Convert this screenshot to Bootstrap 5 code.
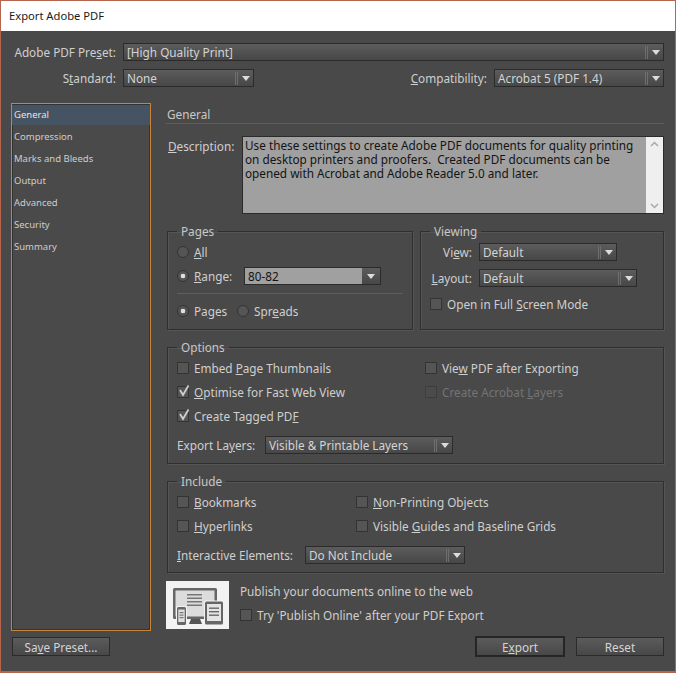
<!DOCTYPE html>
<html lang="en">

<head>
    <meta charset="UTF-8">
    <meta name="viewport" content="width=device-width, initial-scale=1.0">
    <title>Export Adobe PDF</title>
    <link href="https://cdn.jsdelivr.net/npm/bootstrap@5.3.0/dist/css/bootstrap.min.css" rel="stylesheet">
    <style>
        body {
            background: #494949;
            font-family: "Noto Sans", "Liberation Sans", sans-serif;
            font-size: 11.75px;
            line-height: 16px;
            color: #cfcfcf;
        }

        .dlg {
            width: 676px;
            height: 673px;
            border: solid #b5654d;
            border-width: 1px 1px 2px 1px;
            background: #494949;
            overflow: hidden;
        }

        .dlg-title {
            height: 30px;
            background: #fff;
            color: #1a1a1a;
            padding: 7px 8px;
            font-size: 11.2px;
        }

        .top-rows {
            padding: 12px 11px 0 12px;
        }

        .lbl-preset {
            width: 103px;
            margin-right: 7px;
            text-align: right;
            white-space: nowrap;
        }

        .lbl-compat {
            margin-right: 7px;
        }

        .pick {
            height: 18px;
            border: 1px solid #2b2b2b;
            background: linear-gradient(#5c5c5c, #474747);
            color: #d4d4d4;
            padding-left: 3px;
            align-items: center;
            white-space: nowrap;
        }

        .pick .val {
            flex: 1;
        }

        .pick .arr {
            width: 18px;
            height: 13px;
            border-left: 3px double #6e6e6e;
            display: flex;
            align-items: center;
            justify-content: center;
        }

        .pick .arr i {
            width: 0;
            height: 0;
            border: solid transparent;
            border-width: 5px 4px 0;
            border-top-color: #dcdcdc;
        }

        .pick-edit {
            padding-left: 0;
        }

        .pick-edit .val {
            background: #a0a0a0;
            color: #141414;
            height: 16px;
            padding-left: 3px;
        }

        .side {
            width: 140px;
            height: 528px;
            margin-left: 10px;
            border: 1px solid #c5853f;
            box-shadow: inset 0 0 0 1px #333;
            padding: 1px 0;
            font-size: 9.5px;
            background: #4a4a4a;
        }

        .side .list-group-item {
            background: transparent;
            border: 0;
            color: #cdcdcd;
            padding: 0 2px;
            height: 22px;
            line-height: 20px;
        }

        .side .list-group-item.active {
            background: #465362;
            color: #e4e4e4;
            height: 20px;
            margin-bottom: 2px;
        }

        .main-col {
            width: 498px;
            margin-left: 15px;
        }

        .head-txt {
            height: 21px;
            padding: 3px 1px 0;
            border-bottom: 1px solid #5e5e5e;
            color: #c8c8c8;
        }

        .desc-lbl {
            width: 76px;
            padding: 2px 0 0 2px;
        }

        .desc-box {
            width: 422px;
            height: 78px;
            border: 1px solid #2b2b2b;
            background: #a0a0a0;
            color: #141414;
        }

        .desc-txt {
            padding: 1px 2px;
            line-height: 14px;
            white-space: nowrap;
        }

        .desc-bar {
            width: 17px;
            background: #efefef;
            color: #a9a9a9;
        }

        fieldset.grp {
            border: 1px solid #2f2f2f;
            box-shadow: 1px 1px 0 #555, inset 1px 1px 0 #555;
            padding: 0 9px;
            margin-left: 1px;
        }

        fieldset.grp legend {
            float: none;
            width: auto;
            font-size: 11.75px;
            line-height: 16px;
            margin: 0;
            padding: 0 4px;
            color: #c8c8c8;
        }

        .grp-pages {
            width: 246px;
            height: 107px;
        }

        fieldset.grp-view {
            width: 244px;
            height: 107px;
            margin-left: 7px;
        }

        fieldset.grp-opts {
            height: 125px;
            margin-top: 9px;
        }

        fieldset.grp-incl {
            height: 100px;
            margin-top: 9px;
        }

        .ln {
            height: 24px;
            align-items: center;
            white-space: nowrap;
        }

        .form-check-input {
            width: 12px;
            height: 12px;
            margin: 0 5px 0 0;
            flex: none;
            background-color: #555;
            border: 1px solid #333;
        }

        .form-check-input:checked {
            background-color: #555;
            border-color: #333;
        }

        .form-check-input[type=checkbox] {
            border-radius: 0;
        }

        .form-check-input:checked[type=checkbox] {
            background-image: none;
        }

        .form-check-input:checked[type=radio] {
            background-image: radial-gradient(circle, #e0e0e0 2px, transparent 2.6px);
        }

        .form-check-input:disabled {
            opacity: 1;
            background-color: #4b4b4b;
            border-color: #3d3d3d;
        }

        .tick {
            width: 12px;
            height: 12px;
            margin: 0 5px 0 -17px;
            flex: none;
            overflow: visible;
        }

        .off {
            color: #747474;
        }

        .sep {
            border-top: 1px solid #5e5e5e;
            margin: 5px 0;
        }

        .col-a {
            width: 248px;
            margin-top: 1px;
        }

        .col-b {
            width: 179px;
        }

        .col-r {
            margin-top: 1px;
        }

        .pub-art {
            width: 63px;
            height: 48px;
            flex: none;
            background: #f2f2f2;
            display: block;
        }

        .pub-row {
            margin-top: 8px;
        }

        .pub-txt {
            padding-left: 11px;
            margin-top: -2px;
        }

        .act {
            background: linear-gradient(#5b5b5b, #484848);
            border: 1px solid #2b2b2b;
            border-radius: 0;
            color: #d4d4d4;
            font-size: 11.75px;
            line-height: 16px;
            padding: 0;
            height: 19px;
        }

        .act-main {
            border: 2px solid #252525;
            height: 21px;
        }
    </style>
</head>

<body>
    <div class="dlg d-flex flex-column">
        <div class="dlg-title">Export Adobe PDF</div>

        <div class="top-rows">
            <div class="d-flex align-items-center" style="height:18px">
                <div class="lbl-preset">Adobe PDF Pre<u>s</u>et:</div>
                <div class="pick d-flex flex-grow-1"><span class="val">[High Quality Print]</span><span class="arr"><i></i></span></div>
            </div>
            <div class="d-flex align-items-center mt-2" style="height:18px">
                <div class="lbl-preset">S<u>t</u>andard:</div>
                <div class="pick d-flex" style="width:131px"><span class="val">None</span><span class="arr"><i></i></span></div>
                <div class="ms-auto lbl-compat"><u>C</u>ompatibility:</div>
                <div class="pick d-flex" style="width:170px"><span class="val">Acrobat 5 (PDF 1.4)</span><span class="arr"><i></i></span></div>
            </div>
        </div>

        <div class="d-flex" style="margin-top:16px">
            <div class="side">
                <div class="list-group list-group-flush">
                    <div class="list-group-item active">General</div>
                    <div class="list-group-item">Compression</div>
                    <div class="list-group-item">Marks and Bleeds</div>
                    <div class="list-group-item">Output</div>
                    <div class="list-group-item">Advanced</div>
                    <div class="list-group-item">Security</div>
                    <div class="list-group-item">Summary</div>
                </div>
            </div>

            <div class="main-col">
                <div class="head-txt">General</div>

                <div class="d-flex" style="margin-top:12px">
                    <div class="desc-lbl"><u>D</u>escription:</div>
                    <div class="desc-box d-flex">
                        <div class="desc-txt flex-grow-1">Use these settings to create Adobe PDF documents for quality printing<br>on desktop printers and proofers.&nbsp; Created PDF documents can be<br>opened with Acrobat and Adobe Reader 5.0 and later.</div>
                        <div class="desc-bar d-flex flex-column justify-content-between align-items-center py-1">
                            <svg width="9" height="6" viewBox="0 0 9 6"><path d="M1 5 4.500 1.500 8 5" fill="none" stroke="currentColor" stroke-width="1.500"/></svg>
                            <svg width="9" height="6" viewBox="0 0 9 6"><path d="M1 1 4.500 4.500 8 1" fill="none" stroke="currentColor" stroke-width="1.500"/></svg>
                        </div>
                    </div>
                </div>

                <div class="d-flex" style="margin-top:9px">
                    <fieldset class="grp grp-pages">
                        <legend>Pages</legend>
                        <div class="ln d-flex" style="margin-top:1px"><input class="form-check-input" type="radio" name="rng"><span><u>A</u>ll</span></div>
                        <div class="ln d-flex"><input class="form-check-input" type="radio" name="rng" checked><span style="width:50px"><u>R</u>ange:</span>
                            <div class="pick pick-edit d-flex" style="width:137px"><span class="val">80-82</span><span class="arr border-0"><i></i></span></div>
                        </div>
                        <div class="sep"></div>
                        <div class="ln d-flex"><input class="form-check-input" type="radio" name="lay" checked><span style="width:43px">Pa<u>g</u>es</span><input class="form-check-input" type="radio" name="lay"><span>Spr<u>e</u>ads</span></div>
                    </fieldset>

                    <fieldset class="grp grp-view">
                        <legend>Viewing</legend>
                        <div class="d-flex align-items-center" style="height:18px;margin-top:4px"><span style="width:49px;text-align:right;padding-right:7px">Vi<u>e</u>w:</span>
                            <div class="pick d-flex" style="width:138px"><span class="val">Default</span><span class="arr"><i></i></span></div>
                        </div>
                        <div class="d-flex align-items-center" style="height:18px;margin-top:8px"><span style="width:49px;text-align:right;padding-right:7px"><u>L</u>ayout:</span>
                            <div class="pick d-flex" style="width:158px"><span class="val">Default</span><span class="arr"><i></i></span></div>
                        </div>
                        <div class="ln d-flex" style="margin-top:5px"><input class="form-check-input" type="checkbox"><span>Open in Full <u>S</u>creen Mode</span></div>
                    </fieldset>
                </div>

                <fieldset class="grp grp-opts">
                    <legend>Options</legend>
                    <div class="d-flex">
                        <div class="col-a">
                            <div class="ln d-flex"><input class="form-check-input" type="checkbox"><span>Embed <u>P</u>age Thumbnails</span></div>
                            <div class="ln d-flex"><input class="form-check-input" type="checkbox" checked><svg class="tick" viewBox="0 0 12 12"><path d="M3 4 6 9 11.500 -0.500" fill="none" stroke="#cfcfcf" stroke-width="1.800"/></svg><span><u>O</u>ptimise for Fast Web View</span></div>
                            <div class="ln d-flex"><input class="form-check-input" type="checkbox" checked><svg class="tick" viewBox="0 0 12 12"><path d="M3 4 6 9 11.500 -0.500" fill="none" stroke="#cfcfcf" stroke-width="1.800"/></svg><span>Create Tagged PD<u>F</u></span></div>
                        </div>
                        <div class="col-r">
                            <div class="ln d-flex"><input class="form-check-input" type="checkbox"><span>Vie<u>w</u> PDF after Exporting</span></div>
                            <div class="ln d-flex"><input class="form-check-input" type="checkbox" disabled><span class="off">Create Acrobat <u>L</u>ayers</span></div>
                        </div>
                    </div>
                    <div class="d-flex align-items-center" style="height:18px;margin-top:8px"><span style="width:88px">Export La<u>y</u>ers:</span>
                        <div class="pick d-flex" style="width:188px"><span class="val">Visible &amp; Printable Layers</span><span class="arr"><i></i></span></div>
                    </div>
                </fieldset>

                <fieldset class="grp grp-incl">
                    <legend>Include</legend>
                    <div class="d-flex">
                        <div class="col-b col-r">
                            <div class="ln d-flex"><input class="form-check-input" type="checkbox"><span><u>B</u>ookmarks</span></div>
                            <div class="ln d-flex"><input class="form-check-input" type="checkbox"><span><u>H</u>yperlinks</span></div>
                        </div>
                        <div class="col-r">
                            <div class="ln d-flex"><input class="form-check-input" type="checkbox"><span><u>N</u>on-Printing Objects</span></div>
                            <div class="ln d-flex"><input class="form-check-input" type="checkbox"><span>Visible <u>G</u>uides and Baseline Grids</span></div>
                        </div>
                    </div>
                    <div class="d-flex align-items-center" style="height:18px;margin-top:8px"><span style="width:128px"><u>I</u>nteractive Elements:</span>
                        <div class="pick d-flex" style="width:160px"><span class="val">Do Not Include</span><span class="arr"><i></i></span></div>
                    </div>
                </fieldset>

                <div class="d-flex pub-row">
                    <svg class="pub-art" viewBox="0 0 63 48">
                        <rect x="7" y="7" width="44" height="31" rx="1.500" fill="#666"/>
                        <rect x="9.500" y="9.500" width="39" height="26" fill="#dcdcdc"/>
                        <g fill="#777">
                            <rect x="21" y="13" width="15" height="1.500"/>
                            <rect x="21" y="16.500" width="15" height="1.500"/>
                            <rect x="21" y="20" width="15" height="1.500"/>
                            <rect x="21" y="23.500" width="15" height="1.500"/>
                        </g>
                        <path d="M23 43 25 38H34L36 43Z" fill="#555"/>
                        <rect x="38" y="19.500" width="20" height="25" rx="1.500" fill="#f2f2f2"/>
                        <rect x="39" y="20.500" width="18" height="23" rx="1.500" fill="#666"/>
                        <rect x="41" y="23" width="14" height="17" fill="#e4e4e4"/>
                        <g fill="#666">
                            <rect x="43" y="26.500" width="10" height="1.400"/>
                            <rect x="43" y="30" width="10" height="1.400"/>
                            <rect x="43" y="33.500" width="10" height="1.400"/>
                        </g>
                        <rect x="10" y="25" width="11" height="20" rx="1.500" fill="#f2f2f2"/>
                        <rect x="11" y="26" width="9" height="18" rx="1.500" fill="#666"/>
                        <rect x="12.300" y="28.500" width="6.400" height="12.500" fill="#dedede"/>
                        <g fill="#777">
                            <rect x="13.500" y="31" width="4" height="1.200"/>
                            <rect x="13.500" y="33.500" width="4" height="1.200"/>
                            <rect x="13.500" y="36" width="4" height="1.200"/>
                        </g>
                    </svg>
                    <div class="pub-txt">
                        <div class="ln d-flex">Publish your documents online to the web</div>
                        <div class="ln d-flex"><input class="form-check-input" type="checkbox"><span>Try 'Publish Online' after your PDF Export</span></div>
                    </div>
                </div>
            </div>
        </div>

        <div class="d-flex align-items-center" style="margin-top:5px;padding:0 11px">
            <button type="button" class="act btn" style="width:98px">Sa<u>v</u>e Preset...</button>
            <button type="button" class="act act-main btn ms-auto" style="width:90px">E<u>x</u>port</button>
            <button type="button" class="act btn" style="width:88px;margin-left:11px">Reset</button>
        </div>
    </div>

    <script src="https://cdn.jsdelivr.net/npm/bootstrap@5.3.0/dist/js/bootstrap.bundle.min.js"></script>
</body>

</html>
